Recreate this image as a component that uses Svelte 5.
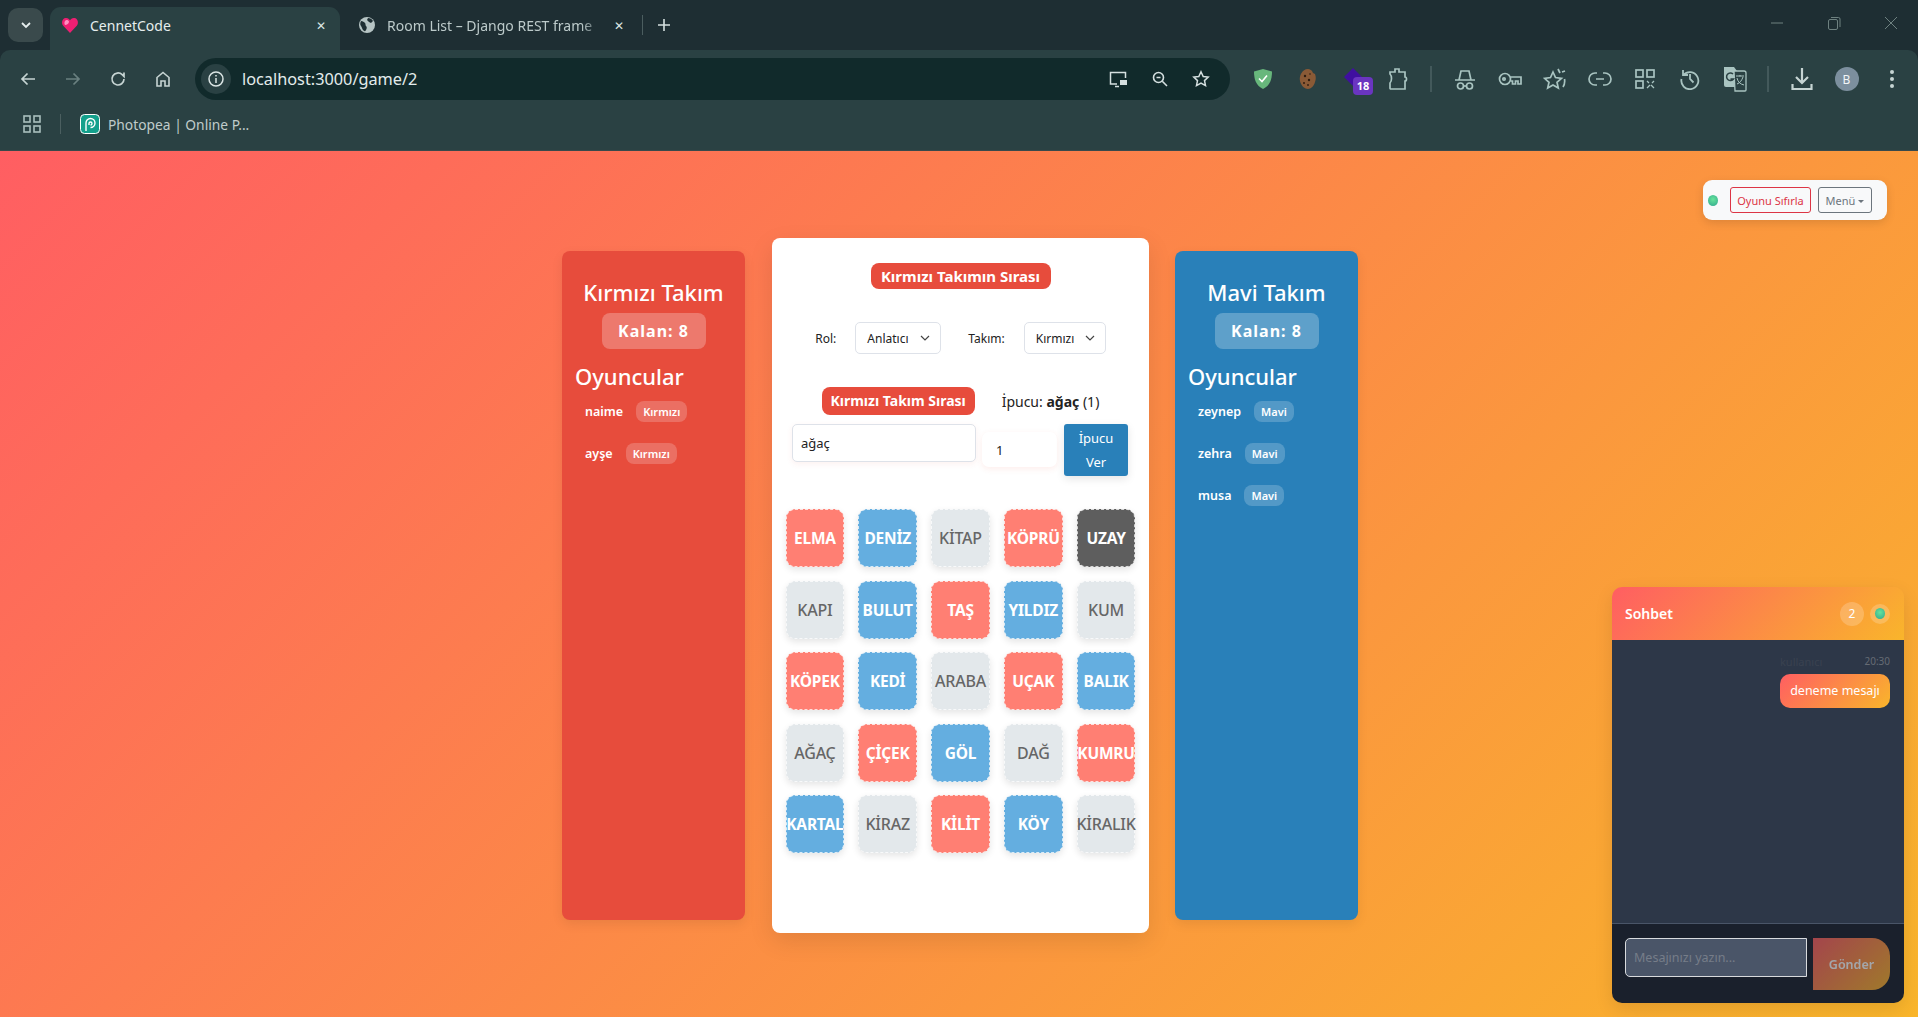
<script>
  const cards = [
    ['ELMA', 'red'], ['DENİZ', 'blue'], ['KİTAP', 'neutral'], ['KÖPRÜ', 'red'], ['UZAY', 'black'],
    ['KAPI', 'neutral'], ['BULUT', 'blue'], ['TAŞ', 'red'], ['YILDIZ', 'blue'], ['KUM', 'neutral'],
    ['KÖPEK', 'red'], ['KEDİ', 'blue'], ['ARABA', 'neutral'], ['UÇAK', 'red'], ['BALIK', 'blue'],
    ['AĞAÇ', 'neutral'], ['ÇİÇEK', 'red'], ['GÖL', 'blue'], ['DAĞ', 'neutral'], ['KUMRU', 'red'],
    ['KARTAL', 'blue'], ['KİRAZ', 'neutral'], ['KİLİT', 'red'], ['KÖY', 'blue'], ['KİRALIK', 'neutral']
  ];
  const redPlayers = [{ name: 'naime', team: 'Kırmızı' }, { name: 'ayşe', team: 'Kırmızı' }];
  const bluePlayers = [
    { name: 'zeynep', team: 'Mavi' },
    { name: 'zehra', team: 'Mavi' },
    { name: 'musa', team: 'Mavi' }
  ];
</script>

<div class="window">
  <div class="tabstrip">
    <button class="tab-search" aria-label="Sekmeleri ara">
      <svg width="12" height="12" viewBox="0 0 12 12"><path d="M2 4l4 4 4-4" fill="none" stroke="#e6eeee" stroke-width="1.8"/></svg>
    </button>
    <div class="tab active">
      <svg width="18" height="18" viewBox="0 0 18 18">
        <path d="M9 17L2 9.600C.2 7 1 2.500 4.600 2 6.600 1.700 8.200 2.700 9 4.300 9.800 2.700 11.400 1.700 13.400 2 17 2.500 17.800 7 16 9.600z" fill="#ee1f72"/>
        <path d="M4 5c1-1.500 3-1.500 4 .5 0 2-2 3.500-4 3.500-.8-1-.8-3 0-4z" fill="#ff8fc0"/>
      </svg>
      <span class="tab-title">CennetCode</span>
      <span class="tab-x">✕</span>
    </div>
    <div class="tab second">
      <svg width="18" height="18" viewBox="0 0 18 18">
        <circle cx="9" cy="9" r="8" fill="#b6c4c4"/>
        <path d="M3 5c2 0 3 1 4 2s0 2 1 3 1 2 0 4-2 1-3 0-1-3-2-4-1-3 0-5zM10 2c2 0 4 1 5 3l-2 2-2-1-2-2z" fill="#1e2e33"/>
      </svg>
      <span class="tab-title faded">Room List – Django REST frame</span>
      <span class="tab-x">✕</span>
    </div>
    <span class="tab-sep"></span>
    <span class="new-tab">
      <svg width="14" height="14" viewBox="0 0 14 14"><path d="M7 1v12M1 7h12" stroke="#d5e0e0" stroke-width="1.6"/></svg>
    </span>
    <div class="window-controls">
      <svg width="14" height="14" viewBox="0 0 14 14"><path d="M1 7h12" stroke="#6e8180" stroke-width="1"/></svg>
      <svg width="14" height="14" viewBox="0 0 14 14" fill="none" stroke="#6e8180"><rect x="1.500" y="3.500" width="9" height="10" rx="1.500"/><path d="M4 1.500h7.500a1.500 1.500 0 0 1 1.500 1.500v8"/></svg>
      <svg width="14" height="14" viewBox="0 0 14 14"><path d="M1 1l12 12M13 1L1 13" stroke="#6e8180" stroke-width="1"/></svg>
    </div>
  </div>

  <div class="toolbar">
    <div class="nav-icons">
      <svg width="18" height="18" viewBox="0 0 18 18" fill="none" stroke="#c6d4d3" stroke-width="1.700"><path d="M16 9H3M8.500 3.500L3 9l5.500 5.500"/></svg>
      <svg width="18" height="18" viewBox="0 0 18 18" fill="none" stroke="#6a8080" stroke-width="1.700"><path d="M2 9h13M9.500 3.500L15 9l-5.500 5.500"/></svg>
      <svg width="18" height="18" viewBox="0 0 18 18" fill="none" stroke="#c6d4d3" stroke-width="1.700"><path d="M15 9a6 6 0 1 1-1.800-4.300L15 6.500V2.500"/></svg>
      <svg width="18" height="18" viewBox="0 0 18 18" fill="none" stroke="#c6d4d3" stroke-width="1.600"><path d="M3 16V7.500L9 2.500l6 5V16h-4v-5H7v5z"/></svg>
    </div>
    <div class="omnibox">
      <span class="site-info">
        <svg width="18" height="18" viewBox="0 0 18 18" fill="none" stroke="#dbe5e4" stroke-width="1.500"><circle cx="9" cy="9" r="7"/><path d="M9 8v5M9 5v1.500"/></svg>
      </span>
      <span class="url">localhost:3000/game/2</span>
      <div class="omni-actions">
        <svg width="20" height="18" viewBox="0 0 20 18" fill="none" stroke="#d5e0e0" stroke-width="1.500"><path d="M9 14H2.500V2.500h15V8M7 16.500h4"/><rect x="12" y="10" width="7" height="5" fill="#d5e0e0" stroke="none"/></svg>
        <svg width="18" height="18" viewBox="0 0 18 18" fill="none" stroke="#d5e0e0" stroke-width="1.600"><circle cx="7.500" cy="7.500" r="5"/><path d="M11.300 11.300L16 16M5.500 7.500h4"/></svg>
        <svg width="18" height="18" viewBox="0 0 18 18" fill="none" stroke="#d5e0e0" stroke-width="1.500"><path d="M9 1.800l2.200 4.700 5 .6-3.700 3.500 1 5L9 13.100l-4.500 2.500 1-5L1.800 7.100l5-.6z"/></svg>
      </div>
    </div>
    <div class="extensions">
      <span class="slot"><svg width="20" height="22" viewBox="0 0 20 22"><path d="M10 1l9 2.500c0 8-2 14-9 17.500C3 17.500 1 11.500 1 3.500z" fill="#68b77c"/><path d="M6 10.500l3 3 5-6" fill="none" stroke="#fff" stroke-width="1.600"/></svg></span>
      <span class="slot"><svg width="18" height="22" viewBox="0 0 18 22"><path d="M9 1c2 0 3 1 4 2l1 2 2 1c1 3 1 5 0 8-1 4-4 7-7 7s-7-3-8-8 2-12 8-12z" fill="#8a5a36"/><g fill="#2f1c10"><circle cx="6" cy="8" r="1.200"/><circle cx="10" cy="12" r="1.200"/><circle cx="5" cy="15" r="1"/><circle cx="11" cy="6" r=".8"/><circle cx="9" cy="17" r=".9"/></g></svg></span>
      <span class="slot purple">
        <svg width="22" height="22" viewBox="0 0 22 22"><path d="M11 0l9 9-9 9-9-9z" fill="#3f0fa0"/></svg>
        <span class="ext-badge">18</span>
      </span>
      <span class="slot"><svg width="20" height="24" viewBox="0 0 20 24" fill="none" stroke="#a9c4c1" stroke-width="1.700"><path d="M2 5h5V2h4v3h6v5c2 0 2 4 0 4v8H3c-1 0-1-1-1-1v-5c2-2 2-7 0-9z"/></svg></span>
      <span class="tool-sep"></span>
      <span class="slot"><svg width="22" height="24" viewBox="0 0 22 24" fill="none" stroke="#a9c4c1" stroke-width="1.700"><path d="M1 13h20M5 13l2-9h8l2 9"/><circle cx="6.500" cy="19" r="3"/><circle cx="15.500" cy="19" r="3"/><path d="M9.500 19h3"/></svg></span>
      <span class="slot"><svg width="24" height="18" viewBox="0 0 24 18" fill="none" stroke="#a9c4c1" stroke-width="1.700"><circle cx="7" cy="9" r="5.500"/><circle cx="6" cy="9" r="1.200"/><path d="M12.500 7H23v7h-3v-3h-2.500v3h-3v-3h-2"/></svg></span>
      <span class="slot"><svg width="24" height="24" viewBox="0 0 24 24" fill="none" stroke="#a9c4c1" stroke-width="1.700"><path d="M10 5l2.500 5.500 6 .8-4.500 4 1.300 5.700L10 18l-5.300 3 1.300-5.700-4.500-4 6-.8zM15 2l2 4M19 5l3-1M20 20c2-3 2-5 1.500-8"/></svg></span>
      <span class="slot"><svg width="24" height="16" viewBox="0 0 24 16" fill="none" stroke="#a9c4c1" stroke-width="1.700"><path d="M9 2H7a6 6 0 0 0 0 12h2M15 2h2a6 6 0 0 1 0 12h-2M8 8h8"/></svg></span>
      <span class="slot"><svg width="22" height="22" viewBox="0 0 22 22" fill="none" stroke="#a9c4c1" stroke-width="1.700"><rect x="2" y="2" width="7" height="7"/><rect x="13" y="2" width="7" height="7"/><rect x="2" y="13" width="7" height="7"/><path d="M13 13l2 2m2 2l3 3m0-7l-2 2m-2 2l-3 3" stroke-width="1.300"/></svg></span>
      <span class="slot"><svg width="22" height="22" viewBox="0 0 22 22" fill="none" stroke="#a9c4c1" stroke-width="1.800"><path d="M4 2v5h5M4.500 7A8.500 8.500 0 1 1 2.500 11M11 6v5l3.500 3.500"/></svg></span>
      <span class="slot"><svg width="24" height="26" viewBox="0 0 24 26"><path d="M1 1h10l3 4v16H3a2 2 0 0 1-2-2z" fill="#a9c4c1"/><path d="M11 5h10a2 2 0 0 1 2 2v17a1 1 0 0 1-1 1H12z" fill="#2a4143" stroke="#a9c4c1" stroke-width="1.300"/><path d="M13 10h8M17 9v1.500M14 12c1 4 3 6 7 7M20 11c-1 3-3 6-6 7" stroke="#a9c4c1" fill="none"/><path d="M10 8a3.800 3.800 0 1 0 .5 5H7.500" fill="none" stroke="#2a4143" stroke-width="1.500"/></svg></span>
      <span class="tool-sep"></span>
      <span class="slot"><svg width="22" height="24" viewBox="0 0 22 24" fill="none" stroke="#c6d4d3" stroke-width="2.200"><path d="M11 1v15M5 10l6 6 6-6M1.500 17v5h19v-5"/></svg></span>
      <span class="slot"><span class="avatar">B</span></span>
      <span class="slot"><svg width="6" height="20" viewBox="0 0 6 20" fill="#c6d4d3"><circle cx="3" cy="3" r="2"/><circle cx="3" cy="10" r="2"/><circle cx="3" cy="17" r="2"/></svg></span>
    </div>
  </div>

  <div class="bookmarks">
    <svg width="18" height="18" viewBox="0 0 18 18" fill="none" stroke="#a9bfbd" stroke-width="1.600"><rect x="1" y="1" width="6" height="6"/><rect x="11" y="1" width="6" height="6"/><rect x="1" y="11" width="6" height="6"/><rect x="11" y="11" width="6" height="6"/></svg>
    <span class="bm-sep"></span>
    <svg width="20" height="20" viewBox="0 0 20 20"><rect x=".5" y=".5" width="19" height="19" rx="4" fill="#14a08c" stroke="#fff"/><path d="M6 17V9a4.500 4.500 0 1 1 4.500 4.500M9 11V9.500a1.500 1.500 0 1 1 1.500 1.500" fill="none" stroke="#fff" stroke-width="1.400"/></svg>
    <span class="bm-label">Photopea | Online P...</span>
  </div>

  <div class="page">
    <div class="game">
      <aside class="team red">
        <h2>Kırmızı Takım</h2>
        <div class="left">Kalan: 8</div>
        <h3>Oyuncular</h3>
        {#each redPlayers as p}
          <div class="player"><span class="pname">{p.name}</span><span class="pill">{p.team}</span></div>
        {/each}
      </aside>

      <main class="board">
        <div class="turn big">Kırmızı Takımın Sırası</div>
        <div class="controls">
          <label class="ctl-label" for="rol">Rol:</label>
          <span id="rol" class="select s1">Anlatıcı
            <svg width="10" height="6" viewBox="0 0 10 6"><path d="M1 1l4 4 4-4" fill="none" stroke="#444" stroke-width="1.200"/></svg>
          </span>
          <label class="ctl-label gap2" for="takim">Takım:</label>
          <span id="takim" class="select s2">Kırmızı
            <svg width="10" height="6" viewBox="0 0 10 6"><path d="M1 1l4 4 4-4" fill="none" stroke="#444" stroke-width="1.200"/></svg>
          </span>
        </div>
        <div class="status">
          <div class="turn small">Kırmızı Takım Sırası</div>
          <div class="hint">İpucu: <b>ağaç</b> (1)</div>
        </div>
        <div class="clue-form">
          <input class="clue" value="ağaç" />
          <input class="count" value="1" />
          <button class="give">İpucu Ver</button>
        </div>
        <div class="grid">
          {#each cards as [word, kind]}
            <div class="card {kind}">{word}</div>
          {/each}
        </div>
      </main>

      <aside class="team blue-team">
        <h2>Mavi Takım</h2>
        <div class="left">Kalan: 8</div>
        <h3>Oyuncular</h3>
        {#each bluePlayers as p}
          <div class="player"><span class="pname">{p.name}</span><span class="pill">{p.team}</span></div>
        {/each}
      </aside>
    </div>

    <div class="top-menu">
      <span class="dot"></span>
      <button class="reset">Oyunu Sıfırla</button>
      <button class="menu">Menü<i class="caret"></i></button>
    </div>

    <section class="chat">
      <header class="chat-head">
        <span class="chat-title">Sohbet</span>
        <span class="count-badge">2</span>
        <span class="halo"><span class="dot small"></span></span>
      </header>
      <div class="chat-body">
        <div class="meta"><span class="sender">kullanıcı</span><span class="time">20:30</span></div>
        <div class="bubble">deneme mesajı</div>
      </div>
      <footer class="chat-foot">
        <input class="chat-input" placeholder="Mesajınızı yazın..." />
        <button class="send">Gönder</button>
      </footer>
    </section>
  </div>
</div>

<style>
  :global(body) {
    margin: 0;
    overflow: hidden;
  }

  .window {
    height: 1017px;
    display: flex;
    flex-direction: column;
    font-family: "Noto Sans", "Open Sans", sans-serif;
    background: #1e2e33;
  }

  /* browser chrome */
  .tabstrip {
    height: 50px;
    display: flex;
    align-items: flex-end;
    flex: none;
  }

  .tab-search {
    width: 35px;
    height: 34px;
    margin: 0 7px 8px 8px;
    padding: 0;
    border: none;
    border-radius: 10px;
    background: #3a4a4c;
    display: flex;
    align-items: center;
    justify-content: center;
  }

  .tab {
    height: 43px;
    padding: 0 14px 7px 11px;
    display: flex;
    align-items: center;
    gap: 11px;
    color: #bccaca;
    font-size: 14px;
    box-sizing: border-box;
    white-space: nowrap;
  }

  .tab.active {
    width: 290px;
    background: #2a4143;
    border-radius: 11px 11px 0 0;
    color: #e6eeee;
  }

  .tab.second {
    width: 302px;
    padding: 0 18px 7px 18px;
    gap: 11px;
  }

  .tab-title {
    flex: 1;
    overflow: hidden;
  }

  .tab-title.faded {
    -webkit-mask-image: linear-gradient(90deg, #000 90%, transparent);
    mask-image: linear-gradient(90deg, #000 90%, transparent);
  }

  .tab-x {
    font-size: 12px;
    color: #dde6e6;
  }

  .tab-sep {
    width: 1px;
    height: 20px;
    background: #4b5d5f;
    margin: 0 0 15px 0;
  }

  .new-tab {
    margin: 0 0 18px 14px;
    display: flex;
  }

  .window-controls {
    margin-left: auto;
    display: flex;
    gap: 43px;
    padding: 0 20px 20px 0;
  }

  .toolbar {
    height: 58px;
    background: #2a4143;
    border-radius: 10px 10px 0 0;
    display: flex;
    align-items: center;
    flex: none;
  }

  .nav-icons {
    display: flex;
    gap: 27px;
    padding-left: 19px;
    width: 195px;
    box-sizing: border-box;
  }

  .omnibox {
    width: 1035px;
    height: 42px;
    background: #112a2b;
    border-radius: 21px;
    display: flex;
    align-items: center;
    box-sizing: border-box;
    padding: 0 20px 0 6px;
  }

  .site-info {
    width: 30px;
    height: 30px;
    border-radius: 50%;
    background: #2a4143;
    display: flex;
    align-items: center;
    justify-content: center;
  }

  .url {
    margin-left: 11px;
    font-size: 16.300px;
    color: #e3ecec;
  }

  .omni-actions {
    margin-left: auto;
    display: flex;
    align-items: center;
    gap: 23px;
  }

  .extensions {
    display: flex;
    align-items: center;
    margin-left: 10px;
  }

  .slot {
    width: 45px;
    display: flex;
    justify-content: center;
    align-items: center;
    position: relative;
  }

  .ext-badge {
    position: absolute;
    left: 23px;
    top: 9px;
    width: 20px;
    height: 18px;
    background: #6a35c0;
    border-radius: 4px;
    color: #fff;
    font-size: 11px;
    font-weight: 700;
    text-align: center;
    line-height: 18px;
  }

  .tool-sep {
    width: 2px;
    height: 26px;
    background: #43595b;
    margin: 0 10px;
  }

  .avatar {
    width: 24px;
    height: 24px;
    border-radius: 50%;
    background: #7c8f9e;
    color: #f2f5f6;
    font-size: 12px;
    display: flex;
    align-items: center;
    justify-content: center;
  }

  .bookmarks {
    height: 32px;
    background: #2a4143;
    display: flex;
    align-items: center;
    padding: 0 0 10px 23px;
    flex: none;
    border-bottom: 1px solid #39494b;
  }

  .bm-sep {
    width: 1px;
    height: 20px;
    background: #4b5f60;
    margin: 0 19px;
  }

  .bm-label {
    margin-left: 8px;
    font-size: 13.800px;
    color: #c0cccb;
  }

  /* game page */
  .page {
    flex: 1;
    position: relative;
    background: linear-gradient(135deg, #ff5e62, #f9b52b);
    overflow: hidden;
  }

  .game {
    display: flex;
    justify-content: center;
    align-items: stretch;
    gap: 26px;
    padding: 87px 0 0 2px;
    height: 695px;
  }

  .team {
    width: 183px;
    margin: 13px 0 13px;
    border-radius: 8px;
    color: #fff;
    box-sizing: border-box;
    padding: 26px 0 0;
    box-shadow: 0 4px 12px rgba(0, 0, 0, 0.08);
    text-align: center;
  }

  .team.red {
    background: #e74c3c;
  }

  .team.blue-team {
    background: #2980b9;
  }

  .team h2 {
    margin: 0;
    font-size: 22px;
    font-weight: 500;
    line-height: 30px;
  }

  .left {
    display: inline-block;
    width: 104px;
    height: 36px;
    margin-top: 6px;
    line-height: 36px;
    border-radius: 8px;
    background: rgba(255, 255, 255, 0.25);
    font-size: 16px;
    font-weight: 700;
    letter-spacing: 1px;
  }

  .team h3 {
    margin: 11px 0 9px 13px;
    font-size: 22px;
    font-weight: 500;
    line-height: 32px;
    text-align: left;
  }

  .player {
    display: flex;
    align-items: center;
    gap: 13px;
    padding-left: 23px;
    height: 21px;
    margin-bottom: 21px;
  }

  .pname {
    font-size: 12.500px;
    font-weight: 600;
  }

  .pill {
    padding: 0 7px;
    height: 21px;
    line-height: 21px;
    border-radius: 8px;
    background: rgba(255, 255, 255, 0.2);
    font-size: 11px;
    font-weight: 600;
  }

  .board {
    width: 377px;
    margin-left: 1px;
    background: #fff;
    border-radius: 8px;
    box-shadow: 0 8px 24px rgba(0, 0, 0, 0.1);
    box-sizing: border-box;
    padding-top: 25px;
    display: flex;
    flex-direction: column;
    align-items: center;
  }

  .turn {
    background: #e74c3c;
    color: #fff;
    font-weight: 700;
    border-radius: 8px;
    text-align: center;
    white-space: nowrap;
  }

  .turn.big {
    width: 180px;
    height: 26px;
    line-height: 26px;
    font-size: 15px;
  }

  .turn.small {
    width: 153px;
    height: 28px;
    line-height: 28px;
    font-size: 14px;
  }

  .controls {
    display: flex;
    align-items: center;
    margin-top: 33px;
    height: 32px;
  }

  .ctl-label {
    font-size: 12px;
    color: #222;
    margin-right: 19px;
  }

  .gap2 {
    margin-left: 27px;
  }

  .select {
    height: 32px;
    box-sizing: border-box;
    border: 1px solid #dee2e9;
    border-radius: 5px;
    display: flex;
    align-items: center;
    justify-content: space-between;
    padding: 0 10px 0 11px;
    font-size: 12px;
    color: #222;
  }

  .s1 {
    width: 86px;
  }

  .s2 {
    width: 82px;
  }

  .status {
    display: flex;
    align-items: center;
    gap: 27px;
    margin-top: 33px;
  }

  .hint {
    font-size: 14px;
    color: #222;
    white-space: nowrap;
  }

  .clue-form {
    display: flex;
    align-items: flex-start;
    width: 337px;
    margin-top: 9px;
  }

  .clue {
    width: 184px;
    height: 38px;
    box-sizing: border-box;
    border: 1px solid #dee2e9;
    border-radius: 5px;
    padding: 0 8px;
    font: 13px "Noto Sans", sans-serif;
    color: #222;
    box-shadow: 0 2px 6px rgba(231, 76, 60, 0.08);
  }

  .count {
    width: 75px;
    height: 35px;
    margin: 8px 7px 0 6px;
    box-sizing: border-box;
    border: none;
    border-radius: 7px;
    padding: 0 14px;
    font: 13px "Noto Sans", sans-serif;
    color: #222;
    box-shadow: 0 2px 6px rgba(231, 76, 60, 0.1);
  }

  .give {
    width: 64px;
    height: 52px;
    padding: 0 10px;
    border: none;
    border-radius: 3px;
    background: #2980b9;
    color: #fff;
    font: 13px/24px "Noto Sans", sans-serif;
    box-shadow: 0 3px 8px rgba(0, 0, 0, 0.1);
  }

  .grid {
    width: 350px;
    margin-top: 33px;
    display: grid;
    grid-template-columns: repeat(5, minmax(0, 1fr));
    grid-auto-rows: 58px;
    gap: 13.500px 14px;
  }

  .card {
    border: 1px dashed rgba(255, 255, 255, 0.75);
    border-radius: 9px;
    display: flex;
    align-items: center;
    justify-content: center;
    font-size: 15.500px;
    font-weight: 700;
    letter-spacing: -0.2px;
    color: #fff;
    box-shadow: 0 3px 7px rgba(0, 0, 0, 0.1);
    white-space: nowrap;
  }

  .card.red {
    background: #ff7f73;
  }

  .card.blue {
    background: #64aee0;
  }

  .card.neutral {
    background: #e3e8eb;
    color: #666;
    font-size: 16px;
    font-weight: 500;
    letter-spacing: -0.2px;
  }

  .card.black {
    background: #5e5e5e;
  }

  /* floating controls */
  .top-menu {
    position: absolute;
    left: 1703px;
    top: 29px;
    width: 184px;
    height: 40px;
    background: #f8f9fa;
    border-radius: 9px;
    box-shadow: 0 3px 10px rgba(0, 0, 0, 0.12);
    display: flex;
    align-items: center;
    box-sizing: border-box;
    padding-left: 5px;
  }

  .dot {
    width: 10px;
    height: 11px;
    border-radius: 50%;
    background: radial-gradient(circle at 50% 40%, #66e39b, #2fa78e);
    flex: none;
  }

  .reset,
  .menu {
    height: 26px;
    padding: 0;
    background: transparent;
    border-radius: 3px;
    font: 11px "Noto Sans", sans-serif;
    box-sizing: border-box;
  }

  .reset {
    width: 81px;
    margin-left: 12px;
    border: 1px solid #dc3545;
    color: #dc3545;
  }

  .menu {
    width: 54px;
    margin-left: 7px;
    border: 1px solid #6c757d;
    color: #6c757d;
  }

  .caret {
    display: inline-block;
    margin-left: 3px;
    vertical-align: 2px;
    border-top: 3.500px solid #6c757d;
    border-left: 3px solid transparent;
    border-right: 3px solid transparent;
  }

  .chat {
    position: absolute;
    left: 1612px;
    top: 436px;
    width: 292px;
    height: 416px;
    border-radius: 10px;
    overflow: hidden;
    display: flex;
    flex-direction: column;
    box-shadow: 0 6px 18px rgba(0, 0, 0, 0.1);
  }

  .chat-head {
    height: 53px;
    flex: none;
    background: linear-gradient(135deg, #ff5e62, #f9b52b);
    display: flex;
    align-items: center;
    padding: 0 14px 0 13px;
    color: #fff;
  }

  .chat-title {
    font-size: 14px;
    font-weight: 600;
    flex: 1;
  }

  .count-badge {
    width: 24px;
    height: 24px;
    border-radius: 50%;
    background: rgba(255, 255, 255, 0.2);
    text-align: center;
    line-height: 24px;
    font-size: 12px;
  }

  .halo {
    width: 20px;
    height: 20px;
    margin-left: 6px;
    border-radius: 50%;
    background: rgba(255, 255, 255, 0.2);
    display: flex;
    align-items: center;
    justify-content: center;
  }

  .chat-body {
    flex: 1;
    background: #2d3748;
    padding: 13px 14px 0 0;
    border-bottom: 1px solid #4a5568;
  }

  .meta {
    display: flex;
    width: 110px;
    margin-left: auto;
    justify-content: space-between;
    align-items: center;
    height: 16px;
  }

  .sender {
    font-size: 11px;
    color: #3a4250;
  }

  .time {
    font-size: 10px;
    color: #656b74;
  }

  .bubble {
    width: 110px;
    height: 34px;
    margin: 5px 0 0 auto;
    box-sizing: border-box;
    border-radius: 10px;
    background: linear-gradient(135deg, #ff5e62, #f9b52b);
    color: #fff;
    font-size: 12.500px;
    line-height: 34px;
    text-align: center;
  }

  .chat-foot {
    height: 79px;
    flex: none;
    background: #1a202c;
    display: flex;
    align-items: flex-start;
    padding: 14px 14px 0 13px;
    box-sizing: border-box;
  }

  .chat-input {
    width: 182px;
    height: 39px;
    box-sizing: border-box;
    background: #4a5568;
    border: 1px solid #d8dadd;
    border-radius: 5px 0 0 5px;
    padding: 0 8px;
    font: 12.500px "Noto Sans", sans-serif;
    color: #fff;
  }

  .chat-input::placeholder {
    color: #767d89;
  }

  .send {
    width: 77px;
    height: 52px;
    margin-left: 6px;
    padding: 0;
    border: none;
    border-radius: 0 18px 18px 0;
    background: linear-gradient(135deg, #ff5e62, #f9b52b);
    opacity: 0.6;
    color: #fff;
    font: 600 12.500px "Noto Sans", sans-serif;
  }
</style>
